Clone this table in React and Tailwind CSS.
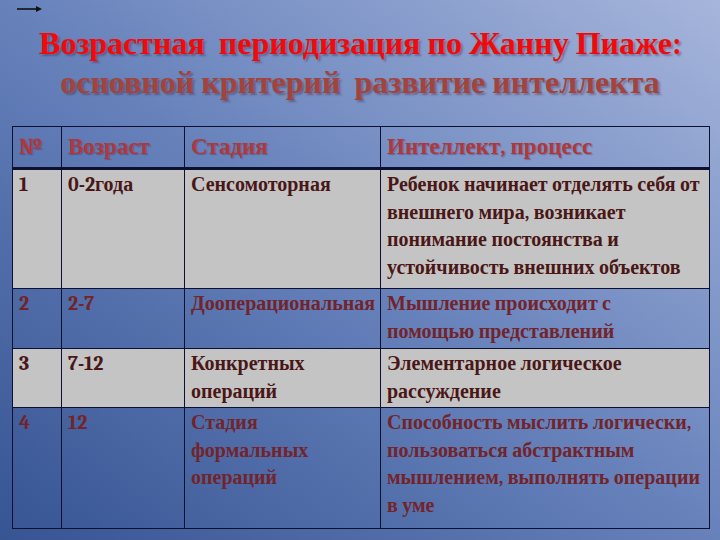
const rows = [
  {
    n: '1',
    age: '0-2года',
    stage: ['Сенсомоторная'],
    text: [
      'Ребенок начинает отделять себя от',
      'внешнего мира, возникает',
      'понимание постоянства и',
      'устойчивость внешних объектов',
    ],
    light: true,
    h: 'h-[120px]',
  },
  {
    n: '2',
    age: '2-7',
    stage: ['Дооперациональная'],
    text: ['Мышление происходит с', 'помощью представлений'],
    light: false,
    h: 'h-[60px]',
  },
  {
    n: '3',
    age: '7-12',
    stage: ['Конкретных', 'операций'],
    text: ['Элементарное логическое', 'рассуждение'],
    light: true,
    h: 'h-[59px]',
  },
  {
    n: '4',
    age: '12',
    stage: ['Стадия', 'формальных', 'операций'],
    text: [
      'Способность мыслить логически,',
      'пользоваться абстрактным',
      'мышлением, выполнять операции',
      'в уме',
    ],
    light: false,
    h: 'h-[121px]',
  },
];

function Lines({ lines }) {
  return lines.map((l, i) => (
    <div key={i} className="whitespace-nowrap">
      {l}
    </div>
  ));
}

export default function App() {
  return (
    <div className="w-[720px] h-[540px] overflow-hidden bg-linear-to-tr from-[#375493] via-[#6782bb] to-[#a6b5db] font-serif">
      {/* arrow */}
      <div className="h-[20px] pl-[17px] pt-[5px]">
        <svg width="26" height="8" viewBox="0 0 26 8">
          <line x1="0" y1="4" x2="22" y2="4" stroke="#111" strokeWidth="1.6" />
          <path d="M19 1 L25 4 L19 7 Z" fill="#111" />
        </svg>
      </div>

      {/* title */}
      <div className="pt-[4px] text-center font-bold text-[32px] leading-[39px] [text-shadow:2px_2px_2px_rgba(60,20,40,0.35)]">
        <div className="text-[#f20a0a]">Возрастная&nbsp; периодизация по Жанну Пиаже:</div>
        <div className="text-[#a3433b]">основной критерий&nbsp; развитие интеллекта</div>
      </div>

      <div className="pl-[12px] pt-[24px]">
        <table className="table-fixed border-collapse w-[697px]">
          <colgroup>
            <col className="w-[49px]" />
            <col className="w-[123px]" />
            <col className="w-[196px]" />
            <col className="w-[329px]" />
          </colgroup>
          <thead>
            <tr className="h-[42px] border-b-[3px] border-[#0d1030]">
              {['№', 'Возраст', 'Стадия', 'Интеллект, процесс'].map((h) => (
                <th
                  key={h}
                  className="border border-[#0d1030] px-[6px] text-left align-middle font-bold text-[23px] text-[#ae383e] [text-shadow:1px_1px_1px_rgba(60,20,40,0.3)]"
                >
                  {h}
                </th>
              ))}
            </tr>
          </thead>
          <tbody>
            {rows.map((r) => (
              <tr
                key={r.n}
                className={`${r.h} ${r.light ? 'bg-[#c4c4c4] text-[#4a1616]' : 'text-[#72242a]'}`}
              >
                {[[r.n], [r.age], r.stage, r.text].map((c, i) => (
                  <td
                    key={i}
                    className="border border-[#0d1030] px-[6px] pt-[1px] align-top font-bold text-[20px] leading-[27.5px]"
                  >
                    <Lines lines={c} />
                  </td>
                ))}
              </tr>
            ))}
          </tbody>
        </table>
      </div>
    </div>
  );
}
